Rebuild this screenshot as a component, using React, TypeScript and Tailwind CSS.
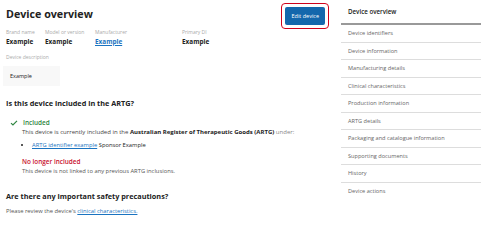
const fields = [
  { label: "Brand name", value: "Example", link: false, w: "w-[39px]" },
  { label: "Model or version", value: "Example", link: false, w: "w-[50px]" },
  { label: "Manufacturer", value: "Example", link: true, w: "w-[87px]" },
  { label: "Primary DI", value: "Example", link: false, w: "w-[50px]" },
];

const navItems = [
  "Device identifiers",
  "Device information",
  "Manufacturing details",
  "Clinical characteristics",
  "Production information",
  "ARTG details",
  "Packaging and catalogue information",
  "Supporting documents",
  "History",
  "Device actions",
];

export default function App() {
  return (
    <div
      className="flex h-[227px] w-[487px] overflow-hidden bg-white text-[#222]"
      style={{ fontFamily: '"Open Sans", "Noto Sans", sans-serif' }}
    >
      <main className="flex-1 pl-[6px] pr-[8px]">
        <div className="flex items-start justify-between">
          <h1 className="pt-[8px] text-[10.7px] font-bold leading-[13px]">Device overview</h1>
          <div className="mt-[3px] mr-[4px] rounded-[4px] border-[1.5px] border-[#d0021b] p-[3px]">
            <button className="block h-[18px] rounded-[2px] bg-[#1467ac] px-[6px] text-[5.5px] leading-[18px] text-white">
              Edit device
            </button>
          </div>
        </div>

        <div className="flex">
          {fields.map((f) => (
            <div key={f.label} className={f.w}>
              <p className="text-[5px] leading-[7px] text-[#aaa]">{f.label}</p>
              <p
                className={
                  f.link
                    ? "mt-[1px] text-[6.4px] font-bold leading-[9px] text-[#1a73c0] underline"
                    : "mt-[1px] text-[6.4px] font-bold leading-[9px]"
                }
              >
                {f.value}
              </p>
            </div>
          ))}
        </div>

        <p className="mt-[8px] text-[5px] leading-[7px] text-[#aaa]">Device description</p>
        <div className="mt-[5px] -ml-[3px] flex h-[20px] w-[57px] items-center bg-[#f8f8f8] pl-[7px] text-[5.5px]">
          Example
        </div>

        <h2 className="mt-[12px] text-[7.3px] font-bold leading-[10px]">
          Is this device included in the ARTG?
        </h2>

        <div className="mt-[10px] flex items-center gap-[5px] pl-[4px]">
          <svg viewBox="0 0 10 8" className="h-[6px] w-[8px]" fill="none">
            <path d="M1 4.2 3.6 6.6 9 1.2" stroke="#2e8540" strokeWidth="1.6" />
          </svg>
          <span className="text-[6.4px] font-semibold leading-[9px] text-[#2e8540]">Included</span>
        </div>
        <div className="pl-[16px]">
          <p className="mt-[1px] text-[6px] leading-[9px] text-[#444]">
            This device is currently included in the{" "}
            <span className="font-bold text-[#222]">Australian Register of Therapeutic Goods (ARTG)</span>{" "}
            <span className="text-[#888]">under:</span>
          </p>
          <ul className="mt-[4px] list-disc pl-[10px] text-[5.8px] leading-[9px]">
            <li>
              <span className="text-[#1a73c0] underline">ARTG identifier example</span> Sponsor Example
            </li>
          </ul>
          <p className="mt-[7px] text-[6.4px] font-semibold leading-[9px] text-[#c8102e]">No longer included</p>
          <p className="mt-[1px] text-[5.8px] leading-[9px] text-[#555]">
            This device is not linked to any previous ARTG inclusions.
          </p>
        </div>

        <h2 className="mt-[15px] text-[7.3px] font-bold leading-[10px]">
          Are there any important safety precautions?
        </h2>
        <p className="mt-[6px] text-[5.8px] leading-[9px] text-[#555]">
          Please review the device's{" "}
          <span className="text-[#1a73c0] underline">clinical characteristics.</span>
        </p>
      </main>

      <aside className="mr-[6px] w-[140px]">
        <div className="flex h-[25px] items-center border-b-2 border-[#999] pl-[7px] text-[6.2px] font-semibold">
          Device overview
        </div>
        <ul>
          {navItems.map((item, i) => (
            <li
              key={item}
              className={
                i < navItems.length - 1
                  ? "flex h-[17.5px] items-center border-b border-[#ddd] pl-[7px] text-[5.6px] text-[#666]"
                  : "flex h-[17.5px] items-center pl-[7px] text-[5.6px] text-[#666]"
              }
            >
              {item}
            </li>
          ))}
        </ul>
      </aside>
    </div>
  );
}
